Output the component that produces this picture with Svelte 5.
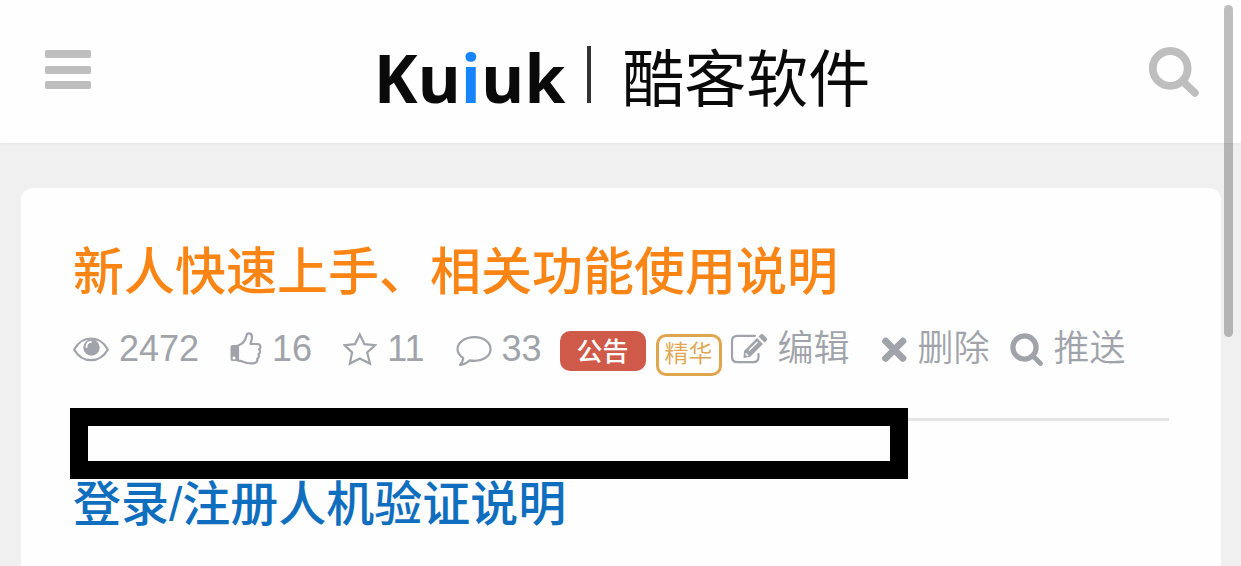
<script lang="ts">
  const stats = [
    { icon: 'eye', label: '浏览', width: 36, value: 2472 },
    { icon: 'thumb', label: '点赞', width: 32, value: 16 },
    { icon: 'star', label: '收藏', width: 34, value: 11 },
    { icon: 'comment', label: '评论', width: 36, value: 33 }
  ];

  let menuOpen = $state(false);
</script>

<div class="page">
  <header class="navbar">
    <button
      class="nav-button"
      type="button"
      aria-label="菜单"
      aria-expanded={menuOpen}
      onclick={() => (menuOpen = !menuOpen)}
    >
      <svg width="46" height="44" viewBox="0 0 46 44" fill="currentColor">
        <rect y="0" width="46" height="8" rx="2" />
        <rect y="16" width="46" height="8" rx="2" />
        <rect y="31" width="46" height="8" rx="2" />
      </svg>
    </button>

    <a class="logo" href="/">
      <span class="logo-name">Ku<span class="logo-accent">i</span>uk</span>
      <span class="logo-divider"></span>
      <span class="logo-cn">酷客软件</span>
    </a>

    <button class="nav-button" type="button" aria-label="搜索">
      <svg width="50" height="50" viewBox="0 0 50 50" fill="none" stroke="currentColor">
        <circle cx="21.2" cy="21.4" r="17.4" stroke-width="7.8" />
        <path d="M34 34.500l12 11.500" stroke-width="7.500" stroke-linecap="round" />
      </svg>
    </button>
  </header>

  <main class="card">
    <h1>新人快速上手、相关功能使用说明</h1>

    <div class="meta">
      <div class="stats">
        {#each stats as stat}
          <span class="item" title={stat.label}>
            <svg
              width={stat.width}
              height="36"
              viewBox="0 0 {stat.width} 36"
              fill="none"
              stroke="currentColor"
              stroke-width="2.2"
              stroke-linejoin="round"
            >
              {#if stat.icon === 'eye'}
                <path d="M1.2 18.5C5 11.500 11 7.500 18 7.500s13 4 16.800 11C31 25.500 25 29.200 18 29.200S5 25.500 1.200 18.500z" />
                <circle cx="18.500" cy="16.500" r="8.200" fill="currentColor" stroke="none" />
                <path d="M13.500 16c0-3 1.800-5 4.500-5.200" stroke="#fefefe" stroke-width="1.800" stroke-linecap="round" />
              {:else if stat.icon === 'thumb'}
                <path
                  d="M8 14.500c5-1.500 7.500-5 8.500-10 .4-2.600 5.500-3.400 5.500 1.500 0 3-1 4.500-1.500 7h7c3.500 0 3.500 4.500 1.600 5.200 1.600 1.800 1 4.300-.6 5 1 2 .2 4-1.200 4.600.3 2.400-.7 4-3.300 4.400-4 .6-8-.2-11-1.500-1.600-.7-3-1-5-1z"
                />
                <path d="M.5 16q0-2 2-2H8v16H2.500q-2 0-2-2z" fill="currentColor" stroke="none" />
                <circle cx="4" cy="27" r="1.500" fill="#fefefe" stroke="none" />
              {:else if stat.icon === 'star'}
                <path
                  d="M16.800 3.500l4.600 9.600 10.800 1-8 7.300 2.800 11.200-10.200-5.200-10 5.200 2.300-11.200-7.700-7.300 10.600-1z"
                  stroke-linejoin="miter"
                />
              {:else}
                <path
                  d="M18.500 6.200c9.500 0 16 5.400 16 12s-6.500 11.600-16 11.600c-1.800 0-3.200-.2-4.800-.5-2.500 2.600-5.500 4.300-9.700 4.500 2-1.800 3-3.800 3.300-6.700-3.600-2.300-5.800-5.400-5.800-9 0-6.600 7.500-11.900 17-11.900z"
                />
              {/if}
            </svg>
            {stat.value}
          </span>
        {/each}
      </div>

      <div class="tags">
        <span class="tag notice">公告</span>
        <span class="tag featured">精华</span>
      </div>

      <div class="actions">
        <a class="item" href="#edit">
          <svg width="38" height="36" viewBox="0 0 38 36" fill="none" stroke="currentColor">
            <path
              d="M25 4.800H7.500Q2 4.800 2 10v16q0 5.200 5.500 5.200H23q5.500 0 5.500-5.200v-3"
              stroke-width="2.200"
              stroke-linecap="round"
            />
            <path d="M14 20L27 7l6 6-13 13-6.500 1z" fill="currentColor" stroke="none" />
            <path d="M28.500 5.500l2-2q1.500-1.300 3 .2l3 3q1.400 1.500 0 3l-2 1.800z" fill="currentColor" stroke="none" />
            <path d="M19 19.500l8.500-8.500" stroke="#fefefe" stroke-width="1.200" />
            <path d="M15.500 22.500l2.500 2.500" stroke="#fefefe" stroke-width="1.500" />
          </svg>
          编辑
        </a>
        <button class="item" type="button">
          <svg width="38" height="36" viewBox="0 0 38 36" fill="none" stroke="currentColor">
            <path d="M16.500 11l15.500 15.500M32 11L16.500 26.500" stroke-width="6.500" stroke-linecap="square" />
            <path d="M15.500 10l17.500 17.500M33 10L15.500 27.500" stroke-width="6.500" stroke-linecap="round" />
          </svg>
          删除
        </button>
        <button class="item" type="button">
          <svg width="34" height="36" viewBox="0 0 34 36" fill="none" stroke="currentColor">
            <circle cx="14.500" cy="16.500" r="11.600" stroke-width="5.200" />
            <path d="M23 25l7.500 7.500" stroke-width="4.800" stroke-linecap="round" />
          </svg>
          推送
        </button>
      </div>
    </div>

    <div class="divider">
      <div class="frame"></div>
    </div>

    <h2>登录/注册人机验证说明</h2>
  </main>

  <div class="scroll-thumb"></div>
</div>

<style>
  :global(body) {
    background: #f0f0f0;
    overflow: hidden;
  }

  .page {
    position: relative;
    font-family: 'Liberation Sans', 'Noto Sans CJK SC', sans-serif;
  }

  .navbar {
    display: flex;
    align-items: center;
    justify-content: space-between;
    height: 143px;
    padding: 0 42px 0 45px;
    box-sizing: border-box;
    background: #fefefe;
    box-shadow: 0 1px 3px rgba(0, 0, 0, 0.05);
  }

  button {
    padding: 0;
    border: 0;
    background: none;
    font: inherit;
    color: inherit;
    cursor: pointer;
  }

  .nav-button {
    color: #bebebe;
  }

  .nav-button svg {
    display: block;
  }

  .logo {
    display: flex;
    align-items: center;
    padding: 6px 0 0 4px;
    color: #0a0a0a;
    text-decoration: none;
    line-height: 80px;
  }

  .logo-name {
    padding-top: 4px;
    font-family: 'Open Sans', 'Noto Sans', sans-serif;
    font-size: 66px;
    font-weight: 700;
  }

  .logo-accent {
    color: #1684fc;
  }

  .logo-divider {
    width: 4px;
    height: 57px;
    margin: 0 31px 0 22px;
    background: #333;
  }

  .logo-cn {
    font-family: 'Noto Sans CJK SC', sans-serif;
    font-size: 62px;
  }

  .card {
    min-height: calc(100vh - 188px);
    margin: 45px 20px 0 21px;
    padding: 53px 52px 0;
    box-sizing: border-box;
    border-radius: 12px 12px 0 0;
    background: #fefefe;
  }

  h1,
  h2 {
    margin: 0;
    font-weight: 500;
    white-space: nowrap;
  }

  h1 {
    font-size: 51px;
    line-height: 64px;
    color: #fa8414;
  }

  h2 {
    margin-top: 52px;
    font-size: 48px;
    line-height: 64px;
    color: #106ebe;
  }

  .meta {
    display: flex;
    align-items: center;
    height: 48px;
    margin-top: 20px;
    font-size: 36px;
    line-height: 48px;
    font-weight: 350;
    color: #a0a4aa;
    white-space: nowrap;
  }

  .stats {
    display: flex;
    gap: 31px;
    margin-right: 18px;
  }

  .item {
    display: flex;
    align-items: center;
    gap: 10px;
    color: inherit;
    text-decoration: none;
  }

  .item svg {
    flex-shrink: 0;
  }

  .tags {
    display: flex;
    align-items: flex-start;
    gap: 10px;
    margin: 8px 8px 0 0;
  }

  .tag {
    box-sizing: border-box;
    border-radius: 10px;
    text-align: center;
  }

  .notice {
    width: 86px;
    height: 40px;
    background: #cf5a4a;
    color: #fff;
    font-size: 26px;
    font-weight: 500;
    line-height: 42px;
  }

  .featured {
    width: 66px;
    height: 42px;
    margin-top: 3px;
    border: 3px solid #e0a64e;
    color: #e0a64e;
    font-size: 24px;
    line-height: 34px;
  }

  .actions {
    display: flex;
    gap: 20px;
  }

  .divider {
    position: relative;
    height: 3px;
    margin-top: 45px;
    background: #e4e4e4;
  }

  .frame {
    position: absolute;
    top: -10px;
    left: -3px;
    width: 100%;
    max-width: 838px;
    height: 71px;
    box-sizing: border-box;
    border: 18px solid #000;
    background: #fefefe;
  }

  .scroll-thumb {
    position: absolute;
    top: 5px;
    right: 8px;
    width: 9px;
    height: 332px;
    border-radius: 5px;
    background: rgba(0, 0, 0, 0.25);
  }
</style>
